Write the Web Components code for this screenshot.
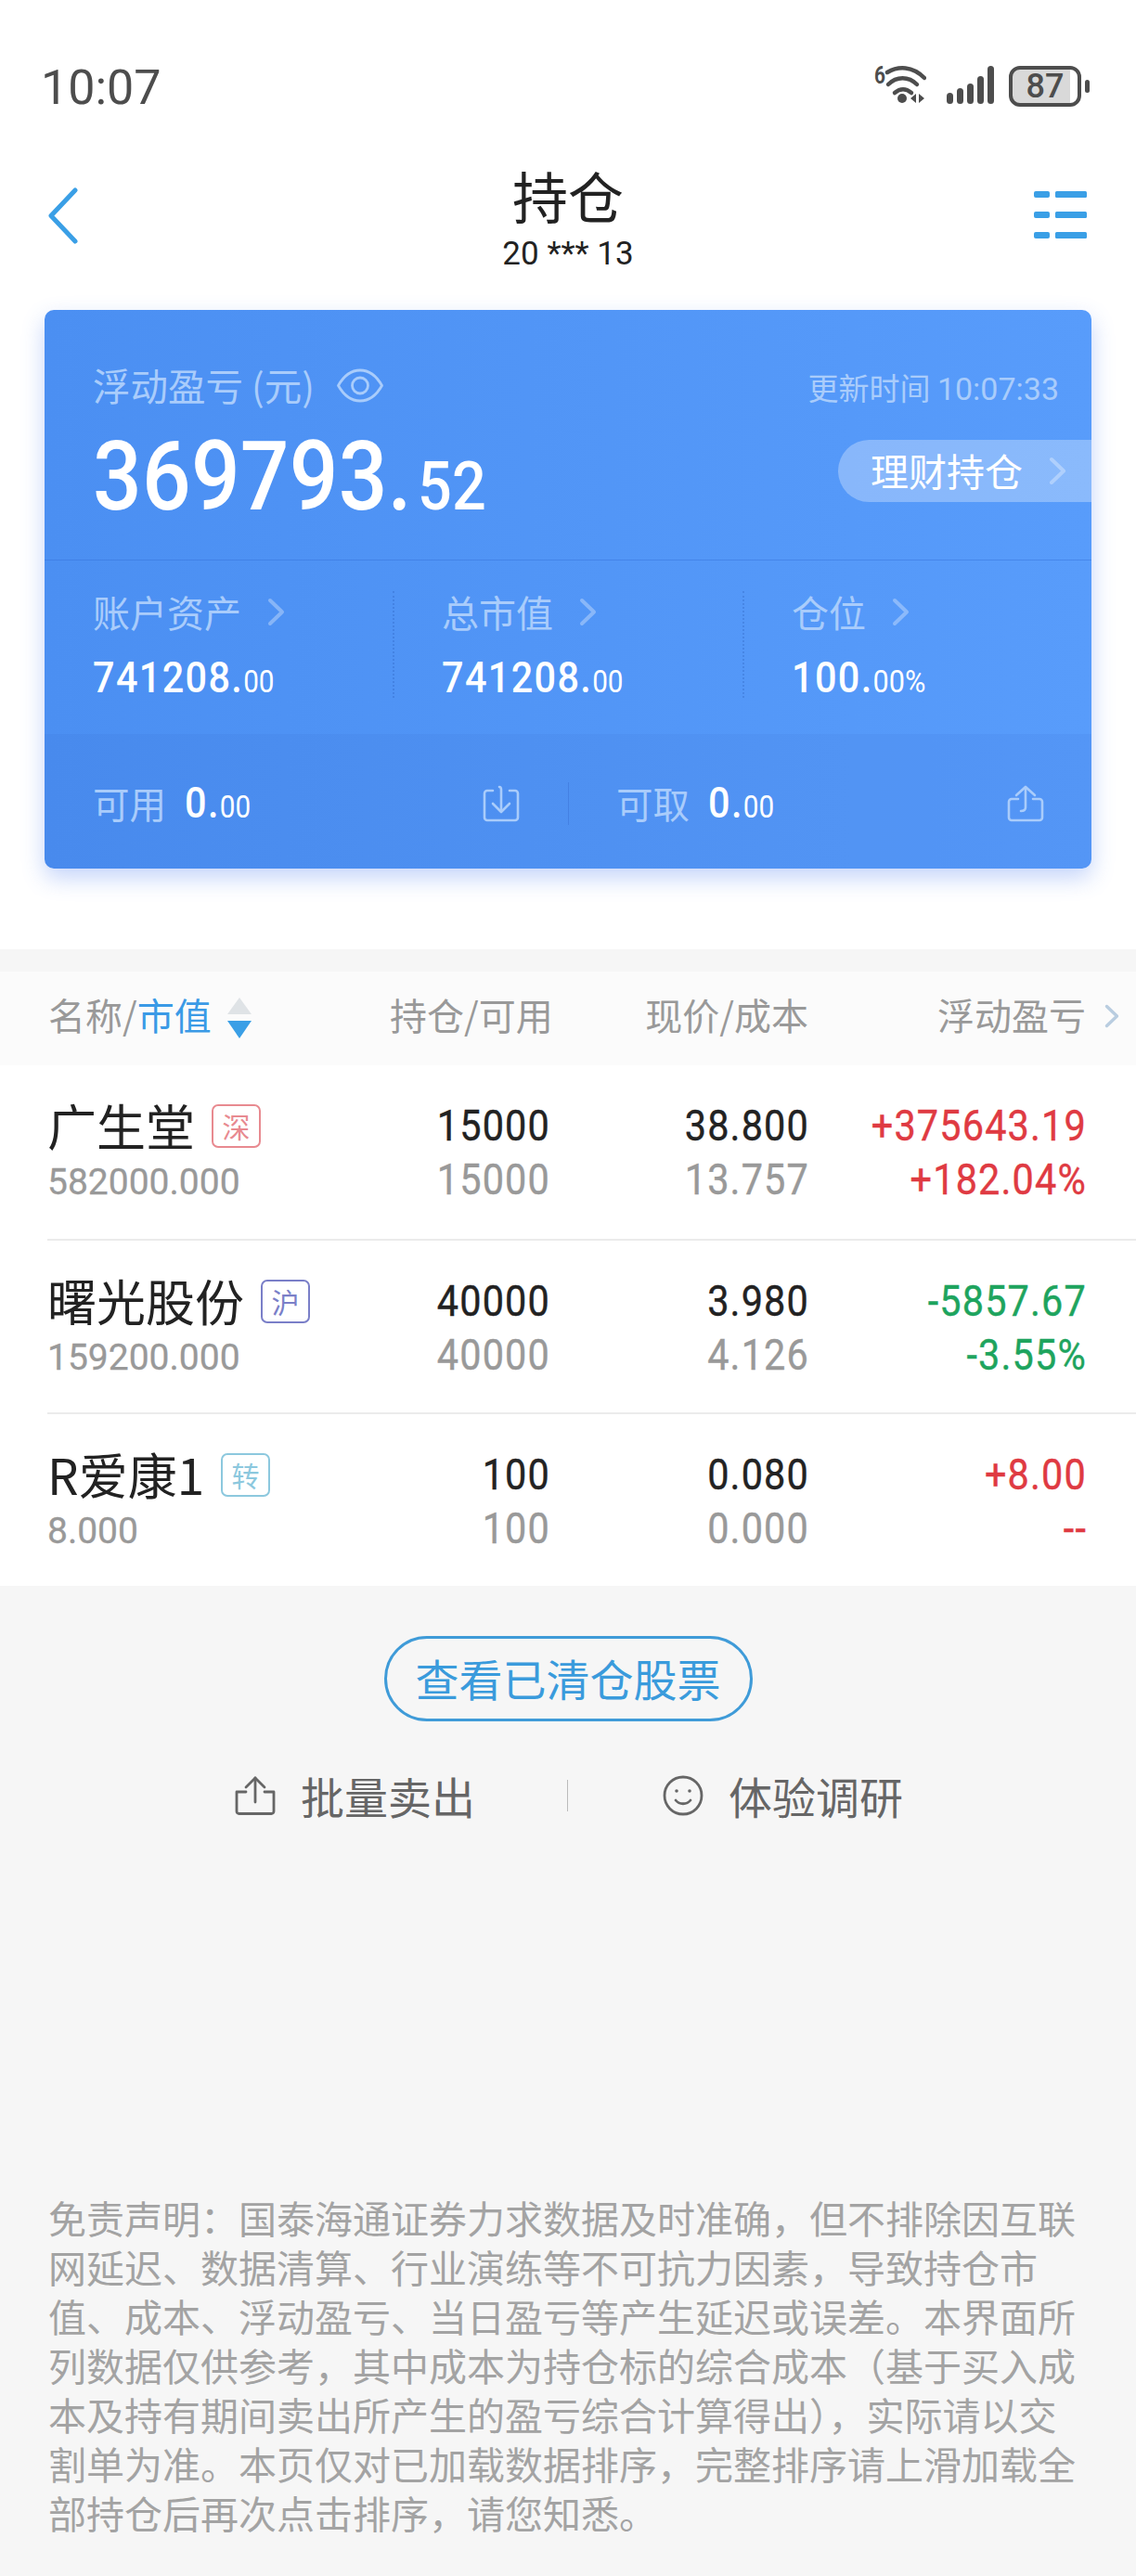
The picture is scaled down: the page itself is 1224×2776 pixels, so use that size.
<!DOCTYPE html>
<html lang="zh-CN">
<head>
<meta charset="utf-8">
<title>持仓</title>
<style>
  html, body { margin: 0; padding: 0; }
  body {
    width: 1224px;
    height: 2776px;
    overflow: hidden;
    background: #f6f6f6;
    font-family: "Noto Sans CJK SC", sans-serif;
  }
  .top { background: #fff; height: 1023px; }
</style>
</head>
<body>
<div class="top">
  <status-bar></status-bar>
  <nav-bar title="持仓" account="20 *** 13"></nav-bar>
  <asset-card></asset-card>
</div>
<holdings-table>
  <holding-row name="广生堂" tag="深" kind="sz" value="582000.000" qty="15000" avail="15000" price="38.800" cost="13.757" pnl="+375643.19" pct="+182.04%" dir="up"></holding-row>
  <holding-row name="曙光股份" tag="沪" kind="sh" value="159200.000" qty="40000" avail="40000" price="3.980" cost="4.126" pnl="-5857.67" pct="-3.55%" dir="down"></holding-row>
  <holding-row name="R爱康1" tag="转" kind="cb" value="8.000" qty="100" avail="100" price="0.080" cost="0.000" pnl="+8.00" pct="--" dir="up"></holding-row>
</holdings-table>
<action-links></action-links>
<disclaimer-note>免责声明&#65306;国泰海通证券力求数据及时准确&#65292;但不排除因互联<br>网延迟、数据清算、行业演练等不可抗力因素&#65292;导致持仓市<br>值、成本、浮动盈亏、当日盈亏等产生延迟或误差。本界面所<br>列数据仅供参考&#65292;其中成本为持仓标的综合成本&#65288;基于买入成<br>本及持有期间卖出所产生的盈亏综合计算得出&#65289;&#65292;实际请以交<br>割单为准。本页仅对已加载数据排序&#65292;完整排序请上滑加载全<br>部持仓后再次点击排序&#65292;请您知悉。</disclaimer-note>

<script>
const chevron = (w, h, color) => `<svg width="${w}" height="${h}" viewBox="0 0 19 31" fill="none" stroke="${color}" stroke-width="4" stroke-linecap="round" stroke-linejoin="round"><path d="M3 3l13 12.5L3 28"/></svg>`;

class StatusBar extends HTMLElement {
  constructor() {
    super();
    this.attachShadow({ mode: 'open' }).innerHTML = `
      <style>
        :host { display: flex; height: 160px; box-sizing: border-box; padding: 71px 50px 0 44px; color: #4d4d4d; font-family: Roboto, sans-serif; }
        .time { font-size: 52px; line-height: 46px; margin-top: 1px; }
        .right { margin-left: auto; display: flex; align-items: flex-start; }
        .six { font-size: 26px; font-weight: 700; line-height: 20px; width: 11px; transform: scaleX(.8); transform-origin: left; }
        .signal { margin-left: 22px; }
        .batt { margin-left: 16px; width: 78px; height: 44px; box-sizing: border-box; border: 4px solid #4d4d4d; border-radius: 12px; background: linear-gradient(90deg, #d9d9d9 88%, #fff 88%); font-size: 36px; font-weight: 500; line-height: 36px; text-align: center; }
        .nub { width: 5px; height: 14px; margin: 15px 0 0 4px; border-radius: 3px; background: #4d4d4d; }
      </style>
      <span class="time">10:07</span>
      <div class="right">
        <span class="six">6</span>
        <svg width="45" height="41" viewBox="0 0 45 41" fill="none" stroke="#4d4d4d" stroke-width="4.5" stroke-linecap="round">
          <path d="M3 7C15 0 30 0 43 13"/><path d="M4 20c9-9 22-9 31 0"/><path d="M11 29c6-5 12-5 18 0"/>
          <circle cx="19" cy="35" r="5" fill="#4d4d4d" stroke="none"/>
          <path d="M34 30v10l-6-5z M37 30v10l6-5z" fill="#4d4d4d" stroke="none"/>
        </svg>
        <svg class="signal" width="51" height="41" viewBox="0 0 51 41" fill="#4d4d4d">
          <rect x="0" y="29" width="7" height="12" rx="3.5"/><rect x="11" y="24" width="7" height="17" rx="3.5"/><rect x="22" y="19" width="7" height="22" rx="3.5"/><rect x="33" y="11" width="7" height="30" rx="3.5"/><rect x="44" y="0" width="7" height="41" rx="3.5"/>
        </svg>
        <div class="batt">87</div>
        <div class="nub"></div>
      </div>`;
  }
}

class NavBar extends HTMLElement {
  constructor() {
    super();
    this.attachShadow({ mode: 'open' }).innerHTML = `
      <style>
        :host { display: grid; grid-template-columns: 1fr auto 1fr; height: 174px; color: #222; }
        .back { margin: 42px 0 0 51px; }
        .mid { padding-top: 18px; text-align: center; }
        .title { font-size: 60px; line-height: 64px; }
        .acct { font-family: Roboto, sans-serif; font-size: 35px; line-height: 40px; margin-top: 12px; white-space: pre; }
        .menu { justify-self: end; margin: 46px 53px 0 0; }
      </style>
      <svg class="back" width="33" height="61" viewBox="0 0 33 61" fill="none" stroke="#3a9fe6" stroke-width="5" stroke-linecap="round" stroke-linejoin="round"><path d="M30 3L4 30.5 30 58"/></svg>
      <div class="mid">
        <div class="title">${this.getAttribute('title')}</div>
        <div class="acct">${this.getAttribute('account')}</div>
      </div>
      <svg class="menu" width="57" height="52" viewBox="0 0 57 52" fill="#3a9fe6">
        <rect x="0" y="0" width="17" height="7" rx="2"/><rect x="23" y="0" width="34" height="7" rx="1.5"/>
        <rect x="0" y="22" width="17" height="7" rx="2"/><rect x="23" y="22" width="34" height="7" rx="1.5"/>
        <rect x="0" y="44" width="17" height="7" rx="2"/><rect x="23" y="44" width="34" height="7" rx="1.5"/>
      </svg>`;
  }
}

class MoneyNum extends HTMLElement {
  constructor() {
    super();
    const size = this.getAttribute('size'), dsize = this.getAttribute('dsize');
    this.attachShadow({ mode: 'open' }).innerHTML = `
      <style>
        :host { display: inline-block; font-family: Roboto, sans-serif; color: #fff; white-space: nowrap; transform: scaleX(var(--sx, .9)); transform-origin: left center; line-height: 50px; font-weight: var(--fw, 500); }
        .i { font-size: ${size}px; letter-spacing: var(--ils, 1.5px); }
        .d { font-size: ${dsize}px; font-weight: var(--dfw, 400); letter-spacing: var(--dls, 0); margin-left: var(--dml, 0); }
      </style>
      <span class="i">${this.getAttribute('int')}</span><span class="d">${this.getAttribute('dec')}</span>`;
  }
}

class StatCell extends HTMLElement {
  constructor() {
    super();
    this.attachShadow({ mode: 'open' }).innerHTML = `
      <style>
        :host { display: block; height: 115px; margin-top: 33px; padding-left: var(--pl, 52px); }
        .label { display: flex; align-items: center; gap: 28px; margin-top: -3px; height: 50px; font-size: 40px; line-height: 50px; color: #a9ccfb; }
        .value { margin-top: 21px; height: 50px; }
      </style>
      <div class="label"><span>${this.getAttribute('label')}</span>${chevron(19, 31, 'rgba(255,255,255,.32)')}</div>
      <div class="value"><slot></slot></div>`;
  }
}

class FundItem extends HTMLElement {
  constructor() {
    super();
    const icon = this.getAttribute('icon') === 'in'
      ? '<path d="M11 6H5a3 3 0 0 0-3 3v26a3 3 0 0 0 3 3h30a3 3 0 0 0 3-3V9a3 3 0 0 0-3-3h-6"/><path d="M18 2c2 0 2 2 2 3v23"/><path d="M11 20l9 9 9-9"/>'
      : '<path d="M12 15H5a3 3 0 0 0-3 3v17a3 3 0 0 0 3 3h30a3 3 0 0 0 3-3V18a3 3 0 0 0-3-3h-7"/><path d="M10 11L20 2l10 9"/><path d="M20 2v22c0 3-2 4-5 4"/>';
    this.attachShadow({ mode: 'open' }).innerHTML = `
      <style>
        :host { display: flex; align-items: center; height: 46px; padding: 0 var(--pr, 52px) 0 var(--pl, 52px); }
        .label { font-size: 39.500px; line-height: 46px; color: #a9ccfb; margin-right: 20px; margin-top: -2px; }
        svg { margin-left: auto; }
        .num { margin-top: 8px; }
      </style>
      <span class="label">${this.getAttribute('label')}</span>
      <div class="num"><slot></slot></div>
      <svg width="40" height="40" viewBox="0 0 40 40" fill="none" stroke="#a9ccfb" stroke-width="2.600" stroke-linecap="round" stroke-linejoin="round">${icon}</svg>`;
  }
}

class AssetCard extends HTMLElement {
  constructor() {
    super();
    this.attachShadow({ mode: 'open' }).innerHTML = `
      <style>
        :host { display: block; margin: 0 48px; height: 602px; border-radius: 10px; background: linear-gradient(90deg, #4b8ff2, #589cfb); box-shadow: 0 10px 24px rgba(70,120,240,.32); position: relative; }
        .head { height: 270px; box-sizing: border-box; display: flex; justify-content: space-between; border-bottom: 1px solid rgba(50,110,215,.45); }
        .left { padding: 56px 0 0 52px; }
        .pl { display: flex; align-items: center; height: 50px; font-size: 40.500px; line-height: 50px; color: #a9ccfb; white-space: pre; }
        .pl svg { margin-left: 24px; }
        .big { margin-top: 24px; height: 100px; line-height: 100px; --ils: .3px; --dml: 7px; --dls: 0; --dfw: 500; }
        .right { padding-top: 58px; display: flex; flex-direction: column; align-items: flex-end; }
        .upd { height: 50px; font-size: 33px; line-height: 50px; color: #a9ccfb; margin-right: 35px; white-space: pre; }
        .upd b { font: 400 34px Roboto, sans-serif; }
        .pill { margin-top: 32px; width: 273px; height: 67px; box-sizing: border-box; padding: 0 27px 0 35px; border-radius: 33.500px 0 0 33.500px; background: rgba(255,255,255,.3); display: flex; align-items: center; justify-content: space-between; color: #fff; font-size: 41px; line-height: 56px; }
        .pill span { margin-top: -4px; }
        .stats { display: grid; grid-template-columns: 375px 377px 1fr; height: 187px; box-sizing: border-box; }
        stat-cell + stat-cell { border-left: 2px dotted rgba(45,95,190,.32); --pl: 51px; }
        .foot { display: grid; grid-template-columns: 564px 1fr; align-items: center; height: 145px; box-sizing: border-box; padding-top: 5px; border-radius: 0 0 10px 10px; background: rgba(30,70,170,.06); }
        .foot fund-item + fund-item { border-left: 1px solid rgba(50,100,200,.35); --pr: 51px; --pl: 51px; }
      </style>
      <div class="head">
        <div class="left">
          <div class="pl"><span>浮动盈亏 (元)</span>
            <svg width="50" height="37" viewBox="0 0 50 37" fill="none" stroke="#a9ccfb" stroke-width="2.800" stroke-linejoin="round"><path d="M1.500 18.500C8 7 16 2 25 2s17 5 23.500 16.500C42 30 34 35 25 35S8 30 1.500 18.500z"/><circle cx="25" cy="18.500" r="8.500"/></svg>
          </div>
          <money-num class="big" int="369793." dec="52" size="103" dsize="72"></money-num>
        </div>
        <div class="right">
          <div class="upd">更新时间 <b>10:07:33</b></div>
          <div class="pill"><span>理财持仓</span>${chevron(19, 31, 'rgba(255,255,255,.32)')}</div>
        </div>
      </div>
      <div class="stats">
        <stat-cell label="账户资产"><money-num int="741208." dec="00" size="46" dsize="33"></money-num></stat-cell>
        <stat-cell label="总市值"><money-num int="741208." dec="00" size="46" dsize="33"></money-num></stat-cell>
        <stat-cell label="仓位"><money-num int="100." dec="00%" size="46" dsize="34"></money-num></stat-cell>
      </div>
      <div class="foot">
        <fund-item label="可用" icon="in"><money-num int="0." dec="00" size="46" dsize="33"></money-num></fund-item>
        <fund-item label="可取" icon="out"><money-num int="0." dec="00" size="46" dsize="33"></money-num></fund-item>
      </div>`;
  }
}

class HoldingsTable extends HTMLElement {
  constructor() {
    super();
    this.attachShadow({ mode: 'open' }).innerHTML = `
      <style>
        :host { display: block; padding-top: 24px; }
        .head { height: 101px; box-sizing: border-box; padding: 0 54px 9px 52px; background: #fbfbfb; display: grid; grid-template-columns: 368px 171px 280px 299px; align-items: center; font-size: 40px; line-height: 50px; color: #999; }
        .head > div { text-align: right; white-space: nowrap; }
        .head > .name { display: flex; align-items: center; justify-content: flex-start; }
        .name i { font-style: normal; color: #3a9ae6; }
        .sort { margin: 8px 0 0 17px; }
        .pnl { position: relative; }
        .pnl svg { position: absolute; left: calc(100% + 20px); top: 14px; }
        .body { background: #fff; }
      </style>
      <div class="head">
        <div class="name"><span>名称/<i>市值</i></span>
          <svg class="sort" width="26" height="44" viewBox="0 0 26 44"><path d="M13 0l13 18H0z" fill="#dfe3e6"/><path d="M0 25h26L13 44z" fill="#3a9fe6"/></svg>
        </div>
        <div>持仓/可用</div>
        <div>现价/成本</div>
        <div class="pnl">浮动盈亏<svg width="16" height="26" viewBox="0 0 16 26" fill="none" stroke="#b9cde0" stroke-width="3.400" stroke-linecap="round" stroke-linejoin="round"><path d="M2.500 2.500L13.500 13 2.500 23.500"/></svg></div>
      </div>
      <div class="body"><slot></slot></div>`;
  }
}

class HoldingRow extends HTMLElement {
  constructor() {
    super();
    const a = n => this.getAttribute(n);
    const colors = { sz: '#e88a90', sh: '#7a7fc8', cb: '#8cc8de' };
    const color = a('dir') === 'up' ? '#df3a42' : '#1ea45e';
    this.attachShadow({ mode: 'open' }).innerHTML = `
      <style>
        :host { display: grid; grid-template-columns: 371px 171px 279px 299px; height: 187px; box-sizing: border-box; margin-left: 51px; padding: 0 52px 0 0; border-top: 2px solid #ebebeb; }
        :host(:first-child) { border-top: 0; }
        .name { padding-top: 34px; }
        .top { display: flex; align-items: center; height: 60px; font-size: 53px; line-height: 60px; color: #222; white-space: nowrap; }
        .tag { margin-left: 18px; width: 53px; height: 47px; box-sizing: border-box; border: 2px solid ${colors[a('kind')]}; border-radius: 7px; color: ${colors[a('kind')]}; font-size: 30px; line-height: 43px; text-align: center; margin-top: 2px; }
        .sub { margin-top: 2px; font: 400 39px/60px Roboto, sans-serif; color: #999; -webkit-text-stroke: .3px #999; }
        .num { padding-top: 35px; text-align: right; font-family: Roboto, sans-serif; font-size: 46px; }
        .num div { height: 57px; line-height: 57px; transform: scaleX(.9); transform-origin: right center; letter-spacing: 1.300px; white-space: nowrap; -webkit-text-stroke: .4px; }
        .num .one { height: 60px; line-height: 60px; color: #222; }
        .num .two { color: #999; }
        .num .pl { color: ${color}; }
      </style>
      <div class="name">
        <div class="top"><span>${a('name')}</span><span class="tag">${a('tag')}</span></div>
        <div class="sub">${a('value')}</div>
      </div>
      <div class="num"><div class="one">${a('qty')}</div><div class="two">${a('avail')}</div></div>
      <div class="num"><div class="one">${a('price')}</div><div class="two">${a('cost')}</div></div>
      <div class="num"><div class="one pl">${a('pnl')}</div><div class="two pl">${a('pct')}</div></div>`;
  }
}

class ActionLinks extends HTMLElement {
  constructor() {
    super();
    this.attachShadow({ mode: 'open' }).innerHTML = `
      <style>
        :host { display: block; padding-top: 54px; color: #666; }
        .btn { width: 397px; height: 92px; box-sizing: border-box; margin: 0 auto; border: 3px solid #3f9bd8; border-radius: 46px; color: #3a9bdc; font-size: 47px; line-height: 84px; text-align: center; white-space: nowrap; }
        .row { display: grid; grid-template-columns: 611px 1fr; height: 60px; margin-top: 50px; font-size: 47px; line-height: 60px; }
        .item { display: flex; align-items: center; gap: 27px; }
        .a { padding-left: 253px; }
        .b { padding-left: 103px; position: relative; }
        .b::before { content: ""; position: absolute; left: 0; top: 13px; height: 34px; width: 1px; background: #bbb; }
      </style>
      <div class="btn">查看已清仓股票</div>
      <div class="row">
        <div class="item a">
          <svg width="44" height="42" viewBox="0 0 44 42" fill="none" stroke="#666" stroke-width="2.800" stroke-linecap="round" stroke-linejoin="round"><path d="M12 17H2v21a2.500 2.500 0 0 0 2.500 2.500h35a2.500 2.500 0 0 0 2.500-2.500V17H32"/><path d="M12 12L22 2l10 10"/><path d="M22 2v26"/></svg>
          <span>批量卖出</span>
        </div>
        <div class="item b">
          <svg width="44" height="44" viewBox="0 0 44 44" fill="none" stroke="#666" stroke-width="2.800" stroke-linecap="round"><circle cx="22" cy="22" r="20"/><circle cx="15" cy="17" r="1.800" fill="#666" stroke="none"/><circle cx="29" cy="17" r="1.800" fill="#666" stroke="none"/><path d="M14 27c4 5 12 5 16 0"/></svg>
          <span>体验调研</span>
        </div>
      </div>`;
  }
}

class DisclaimerNote extends HTMLElement {
  constructor() {
    super();
    this.attachShadow({ mode: 'open' }).innerHTML = `
      <style>
        :host { display: block; margin-top: 398px; padding-left: 52px; font-size: 41px; line-height: 53px; color: #a3a3a3; white-space: nowrap; }
      </style>
      <slot></slot>`;
  }
}

customElements.define('status-bar', StatusBar);
customElements.define('nav-bar', NavBar);
customElements.define('money-num', MoneyNum);
customElements.define('stat-cell', StatCell);
customElements.define('fund-item', FundItem);
customElements.define('asset-card', AssetCard);
customElements.define('holdings-table', HoldingsTable);
customElements.define('holding-row', HoldingRow);
customElements.define('action-links', ActionLinks);
customElements.define('disclaimer-note', DisclaimerNote);
</script>
</body>
</html>
